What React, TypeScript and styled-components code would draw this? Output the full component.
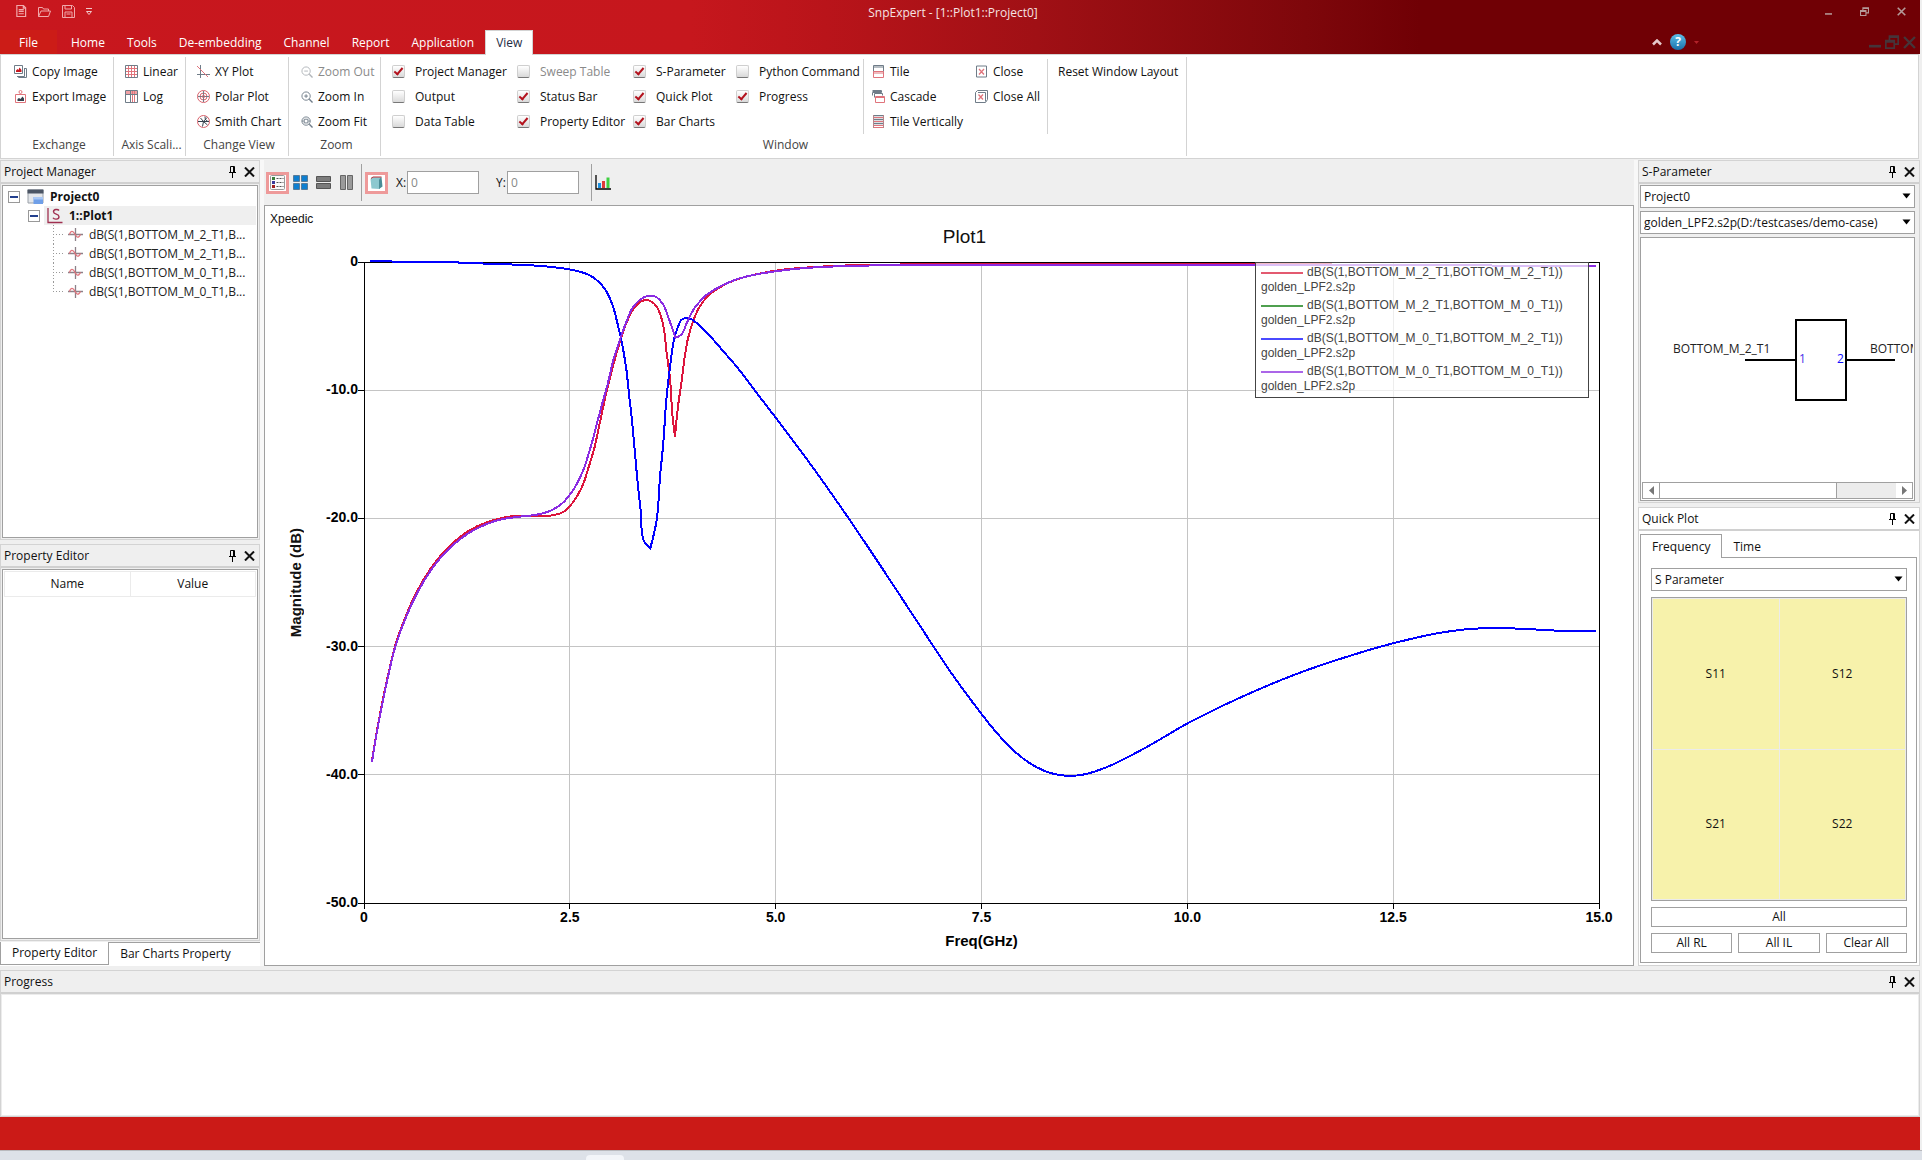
import React, { useState } from "react";
import styled, { createGlobalStyle, css } from "styled-components";

const ui = `"Open Sans", "Noto Sans", sans-serif`;
const plotFont = `"Liberation Sans", Arial, sans-serif`;
const RED = "#e0747c";
const SLATE = "#6f7c88";

const GlobalStyle = createGlobalStyle`
  *, *::before, *::after { box-sizing: border-box; }
  body { margin: 0; font: 12px/16px ${ui}; color: #111; background: #f4f4f4; }
  button, input, select { font: inherit; color: inherit; margin: 0; }
  svg { display: block; flex: none; }
`;

const bareButton = css`
  padding: 0;
  border: 0;
  background: none;
  display: inline-flex;
  align-items: center;
  white-space: nowrap;
`;

/* ---------- shell ---------- */

const Shell = styled.div`
  height: 100vh;
  min-height: 800px;
  display: flex;
  flex-direction: column;
  padding-right: 2px;
  background: #efefef;
`;

const Banner = styled.header`
  background: linear-gradient(90deg, #c8171e 0, #c6171d 36%, #b9141a 43%, #a01015 54%, #7e070b 68%, #700005 74%);
  color: #fff;
`;

const TitleBar = styled.div`
  display: grid;
  grid-template-columns: 1fr auto 1fr;
  align-items: center;
  height: 30px;
  padding-right: 14px;
  padding-bottom: 8px;
`;

const QuickActions = styled.div`
  display: flex;
  align-items: center;
  gap: 11px;
  padding-left: 15px;
`;

const IconButton = styled.button`
  ${bareButton}
`;

const WindowTitle = styled.h1`
  margin: 0;
  padding-top: 4px;
  font-size: 12px;
  line-height: 16px;
  font-weight: 400;
  color: #f6e3e3;
`;

const WindowButtons = styled.div<{ $gap: number }>`
  display: flex;
  align-items: center;
  justify-content: flex-end;
  gap: ${(p) => p.$gap}px;
`;

const TabRow = styled.nav`
  display: flex;
  height: 24px;
`;

const RibbonTab = styled.button<{ $kind?: "file" | "active" }>`
  ${bareButton}
  padding: 1px 11px 0;
  height: 24px;
  color: #fff;
  ${(p) => p.$kind === "file" && css`
    background: #cc1c17;
    padding: 1px 19px 0;
    margin-right: 3px;
  `}
  ${(p) => p.$kind === "active" && css`
    background: #fff;
    color: #1d2c44;
    height: 25px;
    position: relative;
    border: 1px solid #d3d3d3;
    border-bottom: 0;
    padding: 0 10px;
  `}
`;

const TabTools = styled.div`
  display: flex;
  align-items: center;
  margin-left: auto;
  padding-right: 4px;
`;

const HelpGroup = styled.div`
  display: flex;
  align-items: center;
  gap: 8px;
  margin-right: 170px;
`;

const HelpBadge = styled.button`
  ${bareButton}
  justify-content: center;
  width: 16px;
  height: 16px;
  border-radius: 50%;
  background: linear-gradient(#5cc0ea, #1a6fa8);
  color: #fff;
  font-weight: 700;
`;

/* ---------- ribbon ---------- */

const Ribbon = styled.section`
  display: flex;
  height: 105px;
  margin-right: 1px;
  margin-bottom: 1px;
  padding: 2px 0;
  background: #fff;
  border: 1px solid #d3d3d3;
`;

const Group = styled.div<{ $w: number }>`
  display: grid;
  grid-template-rows: 1fr 19px;
  width: ${(p) => p.$w}px;
  border-right: 1px solid #d3d3d3;
`;

const GroupBody = styled.div`
  display: flex;
  padding-top: 2px;
`;

const GroupLabel = styled.div`
  padding-left: 4px;
  text-align: center;
  color: #444;
`;

const Column = styled.div<{ $w?: number; $pad?: number; $line?: boolean }>`
  display: grid;
  grid-template-rows: repeat(3, 25px);
  align-items: center;
  align-self: start;
  padding-left: ${(p) => p.$pad ?? 0}px;
  ${(p) => p.$w && `width: ${p.$w}px;`}
  ${(p) => p.$line && "border-right: 1px solid #d3d3d3;"}
`;

const Command = styled.button`
  ${bareButton}
  gap: 5px;
  &:disabled { color: #8a8a8a; }
`;

const CheckLabel = styled.label<{ $dim?: boolean }>`
  display: flex;
  align-items: center;
  gap: 10px;
  white-space: nowrap;
  color: ${(p) => (p.$dim ? "#8a8a8a" : "#111")};
`;

const CheckBox = styled.input`
  appearance: none;
  flex: none;
  display: grid;
  place-items: center;
  width: 13px;
  height: 13px;
  border: 1px solid #cfcfcf;
  border-bottom-color: #777;
  border-radius: 2px;
  background: linear-gradient(#fff, #d9d9d9);
  &:checked::after {
    content: "";
    width: 5px;
    height: 9px;
    margin-top: -3px;
    border: solid #b3121d;
    border-width: 0 2px 2px 0;
    transform: rotate(40deg);
  }
`;

/* ---------- work area ---------- */

const Workspace = styled.main`
  flex: 1;
  min-height: 0;
  display: grid;
  grid-template-columns: 260px minmax(0, 1fr) 282px;
  gap: 4px;
  background: #f8f8f8;
`;

const Stack = styled.div<{ $rows: string }>`
  display: grid;
  grid-template-columns: minmax(0, 1fr);
  grid-template-rows: ${(p) => p.$rows};
  min-height: 0;
  background: #efefef;
`;

const DockFrame = styled.section<{ $white?: boolean }>`
  display: flex;
  flex-direction: column;
  min-height: 0;
  border: 1px solid #d3d3d3;
  background: ${(p) => (p.$white ? "#fff" : "#efefef")};
`;

const DockHeader = styled.div`
  display: flex;
  align-items: center;
  gap: 8px;
  height: 23px;
  flex: none;
  padding: 0 4px 0 3px;
  border-bottom: 2px solid #d0d0d0;
`;

const DockTitle = styled.h2`
  flex: 1;
  margin: 0;
  font-size: 12px;
  line-height: 16px;
  font-weight: 400;
`;

const DockBody = styled.div<{ $right?: number }>`
  flex: 1;
  min-height: 0;
  display: flex;
  flex-direction: column;
  gap: 3px;
  padding: 1px ${(p) => p.$right ?? 1}px 1px 1px;
`;

const Well = styled.div`
  flex: 1;
  min-height: 0;
  overflow: hidden;
  background: #fff;
  border: 1px solid #a0a0a0;
  padding: 1px;
`;

const Tree = styled.ul`
  list-style: none;
  margin: 0;
  padding: 0;
`;

const TreeRow = styled.div<{ $level: number }>`
  display: flex;
  align-items: center;
  height: 19px;
  gap: 4px;
  padding-left: ${(p) => 4 + p.$level * 20}px;
  white-space: nowrap;
`;

const NodeLabel = styled.span<{ $selected?: boolean }>`
  display: flex;
  flex: 1;
  align-items: center;
  gap: 6px;
  height: 19px;
  padding-left: 3px;
  font-weight: 700;
  background: ${(p) => (p.$selected ? "#efefef" : "none")};
`;

const Expander = styled.button`
  ${bareButton}
  justify-content: center;
  width: 12px;
  height: 12px;
  border: 1px solid #999;
  background: #fff;
`;

const Dash = styled.span`
  width: 8px;
  height: 2px;
  background: #23408e;
`;

const Leaves = styled(Tree)`
  margin-left: 49px;
`;

const Leaf = styled.li`
  display: flex;
  align-items: center;
  height: 19px;
  white-space: nowrap;
  color: #222;
`;

const Branch = styled.span<{ $last?: boolean }>`
  width: 11px;
  margin-right: 4px;
  height: 19px;
  background:
    repeating-linear-gradient(180deg, #999 0 1px, transparent 1px 3px) 0 0 / 1px ${(p) => (p.$last ? "10px" : "19px")} no-repeat,
    repeating-linear-gradient(90deg, #999 0 1px, transparent 1px 3px) 0 9px / 11px 1px no-repeat;
`;

const LeafText = styled.span`
  margin-left: 6px;
`;

const PropertyTable = styled.table`
  width: 100%;
  border-collapse: collapse;
  table-layout: fixed;
  th {
    height: 25px;
    font-weight: 400;
    border: 1px solid #ebebeb;
    padding: 0;
  }
`;

const BottomTabs = styled.div`
  display: flex;
  background: #fff;
  height: 24px;
  margin-top: 1px;
`;

const BottomTab = styled.button<{ $active?: boolean }>`
  ${bareButton}
  height: 23px;
  padding: 0 11px;
  ${(p) => p.$active
    ? css`border: solid #a0a0a0; border-width: 0 1px 1px 1px;`
    : css`flex: 1; border-top: 1px solid #a0a0a0; padding-bottom: 1px;`}
`;

/* ---------- plot window ---------- */

const PlotColumn = styled.div`
  display: flex;
  flex-direction: column;
  min-width: 0;
  min-height: 0;
`;

const Toolbar = styled.div`
  display: flex;
  align-items: center;
  height: 45px;
  flex: none;
  padding-left: 2px;
  background: #efefef;
`;

const ToolButton = styled.button<{ $on?: boolean }>`
  ${bareButton}
  justify-content: center;
  width: 23px;
  height: 22px;
  border: 3px solid ${(p) => (p.$on ? "#ee9a9a" : "transparent")};
  background: ${(p) => (p.$on ? "#fff" : "none")};
`;

const ToolSep = styled.span`
  width: 1px;
  height: 37px;
  margin: 0 3px;
  background: #a0a0a0;
`;

const Coordinate = styled.label`
  display: flex;
  align-items: center;
  margin-right: 9px;
  padding-left: 8px;
`;

const CoordinateInput = styled.input`
  width: 72px;
  height: 23px;
  margin-left: 1px;
  padding: 0 3px;
  border: 1px solid #a0a0a0;
  background: #fff;
  color: #888;
`;

const PlotPanel = styled.div`
  flex: 1;
  min-height: 0;
  display: grid;
  grid-template-columns: 99px minmax(0, 1fr);
  grid-template-rows: 56px minmax(0, 1fr);
  padding: 0 34px 62px 0;
  background: #fff;
  border: 1px solid #a0a0a0;
  font-family: ${plotFont};
`;

const PlotHeading = styled.div`
  grid-column: 1 / -1;
  padding: 5px 0 0 5px;
`;

const PlotTitle = styled.h3`
  margin: 0;
  padding-left: 60px;
  font-size: 19px;
  line-height: 20px;
  font-weight: 400;
  text-align: center;
  color: #111;
`;

const YAxisTitle = styled.div`
  justify-self: start;
  align-self: center;
  margin-left: 22px;
  writing-mode: vertical-rl;
  transform: rotate(180deg);
  font-size: 15px;
  line-height: 18px;
  font-weight: 700;
`;

const PlotArea = styled.div`
  position: relative;
  min-height: 0;
`;

const PlotSvg = styled.svg`
  position: absolute;
  inset: 0;
  width: 100%;
  height: 100%;
  overflow: visible;
  text { font: 700 14px ${plotFont}; }
  text.axis { font-size: 15px; }
`;

const Legend = styled.ul`
  position: absolute;
  top: 0;
  right: 10px;
  width: 334px;
  margin: 0;
  padding: 2px 4px 0 5px;
  list-style: none;
  background: rgba(255, 255, 255, 0.7);
  border: 1px solid #444;
  font-size: 12px;
  line-height: 15px;
  color: #444;
`;

const LegendItem = styled.li`
  height: 33px;
  white-space: nowrap;
`;

const LegendLine = styled.div<{ $color: string }>`
  display: flex;
  align-items: center;
  gap: 4px;
  &::before {
    content: "";
    width: 42px;
    height: 2px;
    background: ${(p) => p.$color};
  }
`;

/* ---------- right docks ---------- */

const SelectWrap = styled.div`
  position: relative;
  flex: none;
  svg { position: absolute; right: 4px; top: 8px; pointer-events: none; }
`;

const SelectBox = styled.select`
  appearance: none;
  display: block;
  width: 100%;
  height: 23px;
  padding: 0 14px 0 3px;
  border: 1px solid #a0a0a0;
  border-radius: 0;
  background: #fff;
`;

const SymbolWell = styled(Well)`
  display: flex;
  flex-direction: column;
`;

const SymbolView = styled.div`
  flex: 1;
  display: flex;
  align-items: center;
  min-width: 0;
  overflow: hidden;
  text { font: 12px ${ui}; }
`;

const ScrollBar = styled.div`
  display: flex;
  height: 17px;
  background: #ececec;
  border: 1px solid #a0a0a0;
`;

const ScrollButton = styled.button`
  ${bareButton}
  justify-content: center;
  width: 16px;
  background: #fff;
`;

const ScrollThumb = styled.span`
  flex: 0 0 178px;
  margin-right: auto;
  background: #fff;
  border: solid #a0a0a0;
  border-width: 0 1px;
`;

const QuickTabs = styled.div`
  display: flex;
  height: 24px;
  flex: none;
  margin-top: 2px;
`;

const QuickTab = styled.button<{ $active?: boolean }>`
  ${bareButton}
  padding: 0 11px;
  ${(p) => p.$active
    ? css`border: 1px solid #a0a0a0; border-bottom: 0;`
    : css`flex: 1; padding-top: 2px; border-bottom: 1px solid #a0a0a0;`}
`;

const QuickPage = styled.div`
  flex: 1;
  display: grid;
  grid-template-columns: minmax(0, 1fr);
  grid-template-rows: 23px 1fr 20px 20px;
  gap: 6px;
  min-height: 0;
  padding: 10px 9px 9px 10px;
  border: solid #a0a0a0;
  border-width: 0 1px 1px 1px;
`;

const QuickBody = styled.div`
  flex: 1;
  min-height: 0;
  display: flex;
  flex-direction: column;
  padding: 1px 2px 2px 1px;
`;

const ParamGrid = styled.div`
  display: grid;
  grid-template: 1fr 1fr / 1fr 1fr;
  gap: 1px;
  padding: 1px;
  border: 1px solid #a0a0a0;
  background: #ebebeb;
`;

const ParamCell = styled.button`
  border: 0;
  background: #f7f2ab;
`;

const ButtonRow = styled.div`
  display: grid;
  grid-auto-columns: 1fr;
  grid-auto-flow: column;
  gap: 6px;
`;

const PlainButton = styled.button`
  ${bareButton}
  justify-content: center;
  background: #fff;
  border: 1px solid #a0a0a0;
`;

/* ---------- bottom ---------- */

const ProgressDock = styled(DockFrame)`
  flex: none;
  height: 147px;
  margin-top: 4px;
`;

const ProgressBody = styled.div`
  flex: 1;
  background: #fff;
  border: 1px solid #ececec;
`;

const StatusBar = styled.footer`
  flex: none;
  height: 33px;
  background: #cb1a17;
`;

const DesktopStrip = styled.div`
  flex: none;
  display: flex;
  align-items: flex-end;
  height: 10px;
  padding-left: 586px;
  margin-right: -2px;
  background: #dde1e8;
  border-top: 1px solid #b9b9bd;
`;

const DesktopTab = styled.span`
  width: 38px;
  height: 5px;
  border-radius: 4px 4px 0 0;
  background: #f3f5f9;
`;

/* ---------- icons ---------- */

const Icon = ({ size = 13, children, color = SLATE }: { size?: number; children: React.ReactNode; color?: string }) => (
  <svg width={size} height={size} viewBox="0 0 13 13" fill="none" stroke={color} aria-hidden="true">{children}</svg>
);

const icons = {
  newDoc: <Icon size={12} color="#f0a9ab"><path d="M2 .5h7l2.500 2.500v9.500H2zM9 .5v3h2.500M4 5h5.500M4 7h5.500M4 9.500h5.500" strokeWidth="1.300" /></Icon>,
  open: <Icon color="#f0a9ab"><path d="M.5 11.500v-9h4l1 1.500h5v2M.5 11.500l2.500-5.500h9.500l-2 5.500z" /></Icon>,
  save: <Icon color="#f0a9ab"><path d="M.5 .5h10l2 2v10H.5zM3 .5v3.500h6.500v-3.500M3 12.500v-5.500h7v5.500M4.500 9h4" /></Icon>,
  more: <svg width="6" height="7" viewBox="0 0 6 7" aria-hidden="true"><path d="M0 .5h6" stroke="#f0c9ca" /><path d="M.5 3.500h5l-2.500 3z" fill="none" stroke="#f0c9ca" /></svg>,
  copy: <Icon><path d="M.5 .5h8v8h-8z" /><path d="M10.500 3v8.500h-7.500M10.500 3.500h2v9h-8v-1" /><path d="M2 7V5.500L3.500 4l1 1 1-2.500L7.500 5v2z" fill="#c8171e" stroke="none" /></Icon>,
  exportImg: <Icon color={RED}><path d="M1.500 4.500h10v8h-10z" /><circle cx="6.500" cy="2" r="1.500" /><path d="M3.500 11V9l1.500-1 1.500 1 2-2.500 1.500 2V11z" fill="#34404c" stroke="none" /></Icon>,
  linear: <Icon><path d="M.5 .5h12v12H.5z" /><path d="M3.500 1v11M6.500 1v11M9.500 1v11M1 3.500h11M1 6.500h11M1 9.500h11" stroke={RED} /></Icon>,
  log: <Icon><path d="M1 1h11v3H1z" fill="#f0a0a4" stroke="none" /><path d="M7.500 1v11M9.500 1v11" stroke={RED} /><path d="M.5 .5h12v12H.5zM.5 4.500h12M5.500 .5v12" /></Icon>,
  xy: <Icon><path d="M3.500 0v13M0 9.500h13" /><path d="M0 1l11 11" stroke={RED} /></Icon>,
  polar: <Icon color="#d9606a"><circle cx="6.500" cy="6.500" r="6" /><circle cx="6.500" cy="6.500" r="3.500" /><path d="M6.500 1v11M1 6.500h11" stroke={SLATE} /><circle cx="6.500" cy="6.500" r="1.200" /></Icon>,
  smith: <Icon color="#d9606a"><circle cx="6.500" cy="6.500" r="6" /><path d="M1 6.500h11M6.500 6.500L10 2.500M6.500 6.500l4 3.500M6.500 6.500l-3-3.500M6.500 6.500l-1 5M12 6.500c-3 0-4-2-4-5" stroke="#34404c" /></Icon>,
  zoomOut: <Icon size={12} color="#b0b4b8"><circle cx="5.500" cy="5.500" r="4.500" /><path d="M3.500 5.500h4" /><path d="M9 9l3.500 3.500" strokeWidth="1.500" /></Icon>,
  zoomIn: <Icon size={12}><circle cx="5.500" cy="5.500" r="4.500" /><path d="M3.500 5.500h4M5.500 3.500v4" /><path d="M9 9l3.500 3.500" strokeWidth="1.500" /></Icon>,
  zoomFit: <Icon size={12}><circle cx="5.500" cy="5.500" r="4.500" /><path d="M3.500 3.500h4v4h-4zM1 5.500h2M8 5.500h2" /><path d="M9 9l3.500 3.500" strokeWidth="1.500" /></Icon>,
  tile: <Icon><path d="M1.500 .5v6h10v-6zM1.500 2h10" /><path d="M1.500 6.500h10v6h-10zM1.500 8h10" stroke={RED} /></Icon>,
  cascade: <Icon><path d="M.5 .5h9v2h-9v3M.5 1.500h9M2.500 3.500h8v2M2.500 3.500v4" /><path d="M3.500 6.500h9v6h-9zM3.500 7.500h9" stroke={RED} /></Icon>,
  tileV: <Icon><path d="M1 .5h11M1 4.500h11M1 8.500h11" strokeWidth="1.500" /><path d="M1 2.500h11M1 6.500h11M1 10.500h11M1 12.500h11" stroke={RED} /><path d="M1.500 0v13M11.500 0v13" stroke="#b5848a" /></Icon>,
  close: <Icon><path d="M1.500 1h10v11h-10z" /><path d="M4 4l5 5.500M9 4L4 9.500" stroke={RED} strokeWidth="1.300" /></Icon>,
  closeAll: <Icon><path d="M2.500 .5h10v9l-2 3h-10v-10zM3 2.500h7.500v9" /><path d="M3.500 4.500l4.500 5M8 4.500l-4.500 5" stroke={RED} strokeWidth="1.300" /></Icon>,
  pin: <svg width="8" height="12" viewBox="0 0 8 12" fill="none" stroke="#000" aria-hidden="true"><path d="M2.500 6.500v-6h4v6M1 6.500h7M4.500 7v5" /><path d="M5.500 1v5" /></svg>,
  x: <svg width="11" height="10" viewBox="0 0 11 10" aria-hidden="true"><path d="M1 .5l9 9M10 .5l-9 9" stroke="#111" strokeWidth="2" /></svg>,
  project: <svg width="17" height="16" viewBox="0 0 17 16" aria-hidden="true"><path d="M1 1h15v13H1z" fill="#e3e6ea" stroke="#9aa0a8" /><path d="M.5 .5h16v4H.5z" fill="#4b5564" /><path d="M6.500 8h9.500v7H6.500z" fill="#6f9fe8" /><path d="M6.500 8h9.500v2.500H6.500z" fill="#a9c7f4" /></svg>,
  plot: <svg width="16" height="16" viewBox="0 0 16 16" fill="none" stroke="#a03050" aria-hidden="true"><path d="M1 0v14.500h14.500" strokeWidth="1.300" /><path d="M12 2.500C11 1 6.500 1 6.500 3.800c0 3 5.500 1.800 5.500 4.900 0 3-5 3-6 1" strokeWidth="1.400" /></svg>,
  wave: <svg width="15" height="15" viewBox="0 0 15 15" fill="none" aria-hidden="true"><path d="M7.500 1v13M0 7.500h15" stroke="#8c8088" strokeWidth="1.300" /><path d="M1.500 7.500C2.500 3.500 5 3.500 6.500 6.500s3.500 6 6 1" stroke={RED} strokeWidth="1.300" /></svg>,
  list: <svg width="15" height="15" viewBox="0 0 15 15" aria-hidden="true"><rect x=".5" y=".5" width="14" height="14" rx="1" fill="#fafafa" stroke="#999" /><path d="M2 2h3v3H2z" fill="#3b7d3b" /><path d="M2 6h3v3H2z" fill="#3a3a9a" /><path d="M2 10h3v3H2z" fill="#a02020" /><path d="M6.500 3.500h7M6.500 7.500h7M6.500 11.500h7" stroke="#555" strokeDasharray="2 1" /></svg>,
  quad: <svg width="15" height="15" viewBox="0 0 15 15" fill="#0f7fd0" stroke="#3f5668" strokeWidth=".6" aria-hidden="true"><path d="M.5 .5h6v6h-6zM8.500 .5h6v6h-6zM.5 8.500h6v6h-6zM8.500 8.500h6v6h-6z" /></svg>,
  rows: <svg width="15" height="15" viewBox="0 0 15 15" fill="#7c7c7c" stroke="#555" aria-hidden="true"><path d="M.5 1.500h14v5H.5zM.5 8.500h14v5H.5z" /></svg>,
  cols: <svg width="15" height="15" viewBox="0 0 15 15" fill="#9a9a9a" stroke="#666" aria-hidden="true"><path d="M1.500 .5h5v14h-5zM8.500 .5h5v14h-5z" /></svg>,
  cube: <svg width="15" height="14" viewBox="0 0 15 14" aria-hidden="true"><path d="M1.500 3l1.500-2h9v9.500L10.500 13l-8-.5z" fill="#8cc8cf" /><path d="M10 3.500v9.500l3.500-2.500L12.500 1z" fill="#4b8c96" /><path d="M2 2.500L4 1h8.500" stroke="#c03038" fill="none" /></svg>,
  bars: <svg width="16" height="15" viewBox="0 0 16 15" aria-hidden="true"><path d="M3 8h3v5H3z" fill="#1a90e0" /><path d="M7 6h3v7H7z" fill="#e03a3a" /><path d="M11.500 2.500h3V13h-3z" fill="#3fd040" /><path d="M1 0v14h15" fill="none" stroke="#000" strokeWidth="1.300" /></svg>,
};

const Minimize = ({ w, color }: { w: number; color: string }) => (
  <svg width={w} height={w} viewBox="0 0 10 10" aria-hidden="true"><path d="M0 8.500h10" stroke={color} strokeWidth="2.200" /></svg>
);
const Restore = ({ w, color }: { w: number; color: string }) => (
  <svg width={w} height={w} viewBox="0 0 10 10" fill="none" stroke={color} strokeWidth="1.200" aria-hidden="true">
    <path d="M.6 4h6v5.400h-6zM.6 5h6M3.200 3.500V.8h6.200v5.700H7M3.200 1.500h6.200" />
  </svg>
);
const Cross = ({ w, color }: { w: number; color: string }) => (
  <svg width={w} height={w} viewBox="0 0 10 10" aria-hidden="true"><path d="M.8 .8l8.400 8.400M9.200 .8L.8 9.200" stroke={color} strokeWidth="1.800" /></svg>
);
const Arrow = () => (
  <svg width="9" height="6" viewBox="0 0 9 6" aria-hidden="true"><path d="M.5 .5h8L4.500 5.500z" fill="#000" /></svg>
);

/* ---------- parts ---------- */

const Tool = ({ icon, text, disabled }: { icon: keyof typeof icons; text: string; disabled?: boolean }) => (
  <Command type="button" disabled={disabled}>{icons[icon]}<span>{text}</span></Command>
);

const Toggle = ({ text, on, disabled }: { text: string; on?: boolean; disabled?: boolean }) => {
  const [checked, setChecked] = useState(!!on);
  return (
    <CheckLabel $dim={disabled}>
      <CheckBox type="checkbox" checked={checked} disabled={disabled} onChange={() => setChecked(!checked)} />
      {text}
    </CheckLabel>
  );
};

const Header = ({ title }: { title: string }) => (
  <DockHeader>
    <DockTitle>{title}</DockTitle>
    <IconButton type="button" aria-label={`Pin ${title}`}>{icons.pin}</IconButton>
    <IconButton type="button" aria-label={`Close ${title}`}>{icons.x}</IconButton>
  </DockHeader>
);

const Choice = ({ label, value }: { label: string; value: string }) => (
  <SelectWrap>
    <SelectBox aria-label={label} defaultValue={value}><option>{value}</option></SelectBox>
    <Arrow />
  </SelectWrap>
);

const leaves = [
  "dB(S(1,BOTTOM_M_2_T1,B...",
  "dB(S(1,BOTTOM_M_2_T1,B...",
  "dB(S(1,BOTTOM_M_0_T1,B...",
  "dB(S(1,BOTTOM_M_0_T1,B...",
];

const traces = [
  { name: "dB(S(1,BOTTOM_M_2_T1,BOTTOM_M_2_T1))", tint: "#e35a70" },
  { name: "dB(S(1,BOTTOM_M_2_T1,BOTTOM_M_0_T1))", tint: "#4fa04f" },
  { name: "dB(S(1,BOTTOM_M_0_T1,BOTTOM_M_2_T1))", tint: "#4a4aff" },
  { name: "dB(S(1,BOTTOM_M_0_T1,BOTTOM_M_0_T1))", tint: "#ab66e8" },
];

/* Trace vertices on the drawing canvas; the axes frame spans 364..1599 by 262..903. */
const blue =
  "370,261.500 443,262 483,263.500 512,264.500 534,265.500 547,266.500 558,267.700 570,269.500 580,271.700 589,275 595,278.700 601.700,285 607.300,293 613.300,307.300 617.300,322.700 621,338.300 626,366.700 629.300,396.700 632.300,423.300 634.700,450 637.700,483 641,513 644,541.300 650.300,548.300 656.700,520 660,477 663.300,443 666.300,400 670,366.700 674.700,336.700 680.700,320.300 686.300,318 692,319.500 699.300,325.500 710,336 723.300,351.300 736.700,366.700 756.700,393 780,423.300 810,463.500 846,514.500 880,565 921.200,627.700 952.700,675 982.300,715 996.300,732.300 1013.300,750.300 1030.300,763.500 1044.800,771 1059.300,775 1071.500,775.700 1081.200,775 1093.300,772 1110.200,765.700 1129.600,756.200 1151.400,744.400 1188.300,723 1238.700,698.300 1296.900,673.800 1360,652.700 1394.300,643 1444.700,632 1485.900,628 1532,629.300 1558.600,630.700 1596,631";
const purple =
  "372,761.700 376.700,733.300 381.700,706.700 387.300,680 395.300,646.700 405,619.500 416.700,594 430,571.500 442,556 455,543.300 470,532.300 486.700,524 501.700,519.300 516.700,517 536.700,514.700 550,511 558.300,506.300 564,501.700 570.300,494 576.700,484.300 583.300,470 588.300,455 593.300,437.700 598.300,418.300 602.700,401.700 607.700,384 613.300,360 621,336.700 626,322.700 631.700,309.300 637.700,301.700 644,297.300 650.300,295.700 656.700,297.300 663,304.300 668.700,318.300 675.300,337.700 681,335 687.300,321.700 693.700,309.300 700,301.300 706,295.300 721.700,285.700 736.700,279.300 753.300,275 780,270.700 806,268 833,266.500 870,265.500 940,265 1279,265 1596,265.800";
const red =
  "372,760.700 376.700,732 381.700,705.400 387.300,678.600 395.300,645.300 405,618 416.700,592 430,569.500 442,554 455,541 470,530 486.700,522.300 501.700,518 514,516 550,515.700 563.300,512 570.300,505.700 576.700,496.700 582.700,485.300 588.300,468.300 594.300,448.300 598.300,430 603.300,406.700 607.700,386.700 614,362.300 621,338.300 626,324 631.700,311.700 637.700,304 644,300.300 650.300,301 656.700,306.700 663,324.300 666.700,353.300 670,378.300 672.300,413.300 675,436.700 678,406.700 682,378.300 685,355 688,338.300 693.300,320.700 699.300,307.300 708.300,295.700 721.700,286.300 736.700,279.500 753.300,275 780,270 833,266 900,264.500 1332,264.500";

/* Spline through the vertices; sharp notches keep their corners. */
const toPath = (list: string) => {
  const pts = list.split(" ").map((s) => s.split(",").map(Number));
  const tangent = (i: number) => {
    const a = pts[i - 1];
    const b = pts[i];
    const c = pts[i + 1];
    if (!a || !c) return [0, 0];
    const u = [b[0] - a[0], b[1] - a[1]];
    const v = [c[0] - b[0], c[1] - b[1]];
    const lu = Math.hypot(u[0], u[1]);
    const lv = Math.hypot(v[0], v[1]);
    if ((u[0] * v[0] + u[1] * v[1]) / (lu * lv) < 0.75) return [0, 0];
    const x = u[0] / lu + v[0] / lv;
    const y = u[1] / lu + v[1] / lv;
    const n = Math.hypot(x, y);
    return [x / n, y / n];
  };
  let d = `M${pts[0][0]} ${pts[0][1]}`;
  for (let i = 1; i < pts.length; i++) {
    const [p, q] = [pts[i - 1], pts[i]];
    const k = Math.hypot(q[0] - p[0], q[1] - p[1]) / 3;
    const [s, t] = [tangent(i - 1), tangent(i)];
    d += `C${p[0] + s[0] * k} ${p[1] + s[1] * k} ${q[0] - t[0] * k} ${q[1] - t[1] * k} ${q[0]} ${q[1]}`;
  }
  return d;
};

const curves = [
  { color: "#dc143c", d: toPath(red) },
  { color: "#0000ff", d: toPath(blue) },
  { color: "#8a2be2", d: toPath(purple) },
];

const yTicks = ["0", "-10.0", "-20.0", "-30.0", "-40.0", "-50.0"];
const xTicks = ["0", "2.5", "5.0", "7.5", "10.0", "12.5", "15.0"];
const pct = (i: number, n: number) => `${(i / n) * 100}%`;

const Chart = () => (
  <PlotArea>
    <PlotSvg role="img" aria-label="Plot1 magnitude over frequency">
      <g stroke="#c4c4c4" shapeRendering="crispEdges">
        {yTicks.slice(1, -1).map((t, i) => <line key={t} x1="0" x2="100%" y1={pct(i + 1, 5)} y2={pct(i + 1, 5)} />)}
        {xTicks.slice(1, -1).map((t, i) => <line key={t} y1="0" y2="100%" x1={pct(i + 1, 6)} x2={pct(i + 1, 6)} />)}
      </g>
      <g stroke="#000" shapeRendering="crispEdges">
        <rect width="100%" height="100%" fill="none" />
        {yTicks.map((t, i) => <line key={t} x1="-6" x2="0" y1={pct(i, 5)} y2={pct(i, 5)} />)}
        {xTicks.map((t, i) => (
          <svg key={t} y="100%" overflow="visible"><line x1={pct(i, 6)} x2={pct(i, 6)} y1="0" y2="6" /></svg>
        ))}
      </g>
      {yTicks.map((t, i) => <text key={t} x="-6" y={pct(i, 5)} dy="4" textAnchor="end">{t}</text>)}
      {xTicks.map((t, i) => <text key={t} x={pct(i, 6)} y="100%" dy="19" textAnchor="middle">{t}</text>)}
      <text className="axis" x="50%" y="100%" dy="43" textAnchor="middle">Freq(GHz)</text>
      <svg width="100%" height="100%" viewBox="364 262 1235 641" preserveAspectRatio="none" overflow="visible"
        fill="none" strokeWidth="2" shapeRendering="crispEdges">
        {curves.map((c) => <path key={c.color} d={c.d} stroke={c.color} vectorEffect="non-scaling-stroke" />)}
      </svg>
    </PlotSvg>
    <Legend>
      {traces.map((t) => (
        <LegendItem key={t.name}>
          <LegendLine $color={t.tint}>{t.name}</LegendLine>
          <div>golden_LPF2.s2p</div>
        </LegendItem>
      ))}
    </Legend>
  </PlotArea>
);

export default function App() {
  return (
    <>
      <GlobalStyle />
      <Shell>
        <Banner>
          <TitleBar>
            <QuickActions>
              <IconButton type="button" aria-label="New">{icons.newDoc}</IconButton>
              <IconButton type="button" aria-label="Open">{icons.open}</IconButton>
              <IconButton type="button" aria-label="Save">{icons.save}</IconButton>
              <IconButton type="button" aria-label="Customize">{icons.more}</IconButton>
            </QuickActions>
            <WindowTitle>SnpExpert - [1::Plot1::Project0]</WindowTitle>
            <WindowButtons $gap={28}>
              <IconButton type="button" aria-label="Minimize"><Minimize w={7} color="#b59a9a" /></IconButton>
              <IconButton type="button" aria-label="Restore"><Restore w={9} color="#b59a9a" /></IconButton>
              <IconButton type="button" aria-label="Close"><Cross w={9} color="#b59a9a" /></IconButton>
            </WindowButtons>
          </TitleBar>
          <TabRow>
            <RibbonTab type="button" $kind="file">File</RibbonTab>
            {["Home", "Tools", "De-embedding", "Channel", "Report", "Application"].map((t) => (
              <RibbonTab type="button" key={t}>{t}</RibbonTab>
            ))}
            <RibbonTab type="button" $kind="active">View</RibbonTab>
            <TabTools>
              <HelpGroup>
                <IconButton type="button" aria-label="Collapse ribbon">
                  <svg width="10" height="7" viewBox="0 0 10 7" aria-hidden="true"><path d="M1 5.500l4-4 4 4" fill="none" stroke="#e6c9cc" strokeWidth="2.500" /></svg>
                </IconButton>
                <HelpBadge type="button" aria-label="Help">?</HelpBadge>
                <svg width="5" height="3" viewBox="0 0 5 3" aria-hidden="true"><path d="M0 0h5L2.500 3z" fill="#b3222a" /></svg>
              </HelpGroup>
              <WindowButtons $gap={4}>
                <IconButton type="button" aria-label="Minimize plot"><Minimize w={12} color="#45353a" /></IconButton>
                <IconButton type="button" aria-label="Restore plot"><Restore w={14} color="#45353a" /></IconButton>
                <IconButton type="button" aria-label="Close plot"><Cross w={13} color="#45353a" /></IconButton>
              </WindowButtons>
            </TabTools>
          </TabRow>
        </Banner>

        <Ribbon>
          <Group $w={113}>
            <GroupBody>
              <Column $pad={13}><Tool icon="copy" text="Copy Image" /><Tool icon="exportImg" text="Export Image" /></Column>
            </GroupBody>
            <GroupLabel>Exchange</GroupLabel>
          </Group>
          <Group $w={72}>
            <GroupBody>
              <Column $pad={11}><Tool icon="linear" text="Linear" /><Tool icon="log" text="Log" /></Column>
            </GroupBody>
            <GroupLabel>Axis Scali...</GroupLabel>
          </Group>
          <Group $w={103}>
            <GroupBody>
              <Column $pad={11}>
                <Tool icon="xy" text="XY Plot" /><Tool icon="polar" text="Polar Plot" /><Tool icon="smith" text="Smith Chart" />
              </Column>
            </GroupBody>
            <GroupLabel>Change View</GroupLabel>
          </Group>
          <Group $w={92}>
            <GroupBody>
              <Column $pad={12}>
                <Tool icon="zoomOut" text="Zoom Out" disabled /><Tool icon="zoomIn" text="Zoom In" /><Tool icon="zoomFit" text="Zoom Fit" />
              </Column>
            </GroupBody>
            <GroupLabel>Zoom</GroupLabel>
          </Group>
          <Group $w={806}>
            <GroupBody>
              <Column $w={125} $pad={11}>
                <Toggle text="Project Manager" on /><Toggle text="Output" /><Toggle text="Data Table" />
              </Column>
              <Column $w={116} $pad={11}>
                <Toggle text="Sweep Table" disabled /><Toggle text="Status Bar" on /><Toggle text="Property Editor" on />
              </Column>
              <Column $w={109} $pad={11}>
                <Toggle text="S-Parameter" on /><Toggle text="Quick Plot" on /><Toggle text="Bar Charts" on />
              </Column>
              <Column $w={133} $pad={5} $line>
                <Toggle text="Python Command" /><Toggle text="Progress" on />
              </Column>
              <Column $w={101} $pad={8}>
                <Tool icon="tile" text="Tile" /><Tool icon="cascade" text="Cascade" /><Tool icon="tileV" text="Tile Vertically" />
              </Column>
              <Column $w={83} $pad={10} $line><Tool icon="close" text="Close" /><Tool icon="closeAll" text="Close All" /></Column>
              <Column $pad={10}><Command type="button">Reset Window Layout</Command></Column>
            </GroupBody>
            <GroupLabel>Window</GroupLabel>
          </Group>
        </Ribbon>

        <Workspace>
          <Stack $rows="380fr 4px 397fr 25px">
            <DockFrame>
              <Header title="Project Manager" />
              <DockBody>
                <Well>
                  <Tree>
                    <li>
                      <TreeRow $level={0}>
                        <Expander type="button" aria-label="Collapse Project0"><Dash /></Expander>
                        <NodeLabel>{icons.project}Project0</NodeLabel>
                      </TreeRow>
                      <TreeRow $level={1}>
                        <Expander type="button" aria-label="Collapse Plot1"><Dash /></Expander>
                        <NodeLabel $selected>{icons.plot}1::Plot1</NodeLabel>
                      </TreeRow>
                      <Leaves>
                        {leaves.map((l, i) => (
                          <Leaf key={i}><Branch $last={i === leaves.length - 1} />{icons.wave}<LeafText>{l}</LeafText></Leaf>
                        ))}
                      </Leaves>
                    </li>
                  </Tree>
                </Well>
              </DockBody>
            </DockFrame>
            <span />
            <DockFrame>
              <Header title="Property Editor" />
              <DockBody>
                <Well>
                  <PropertyTable><thead><tr><th>Name</th><th>Value</th></tr></thead></PropertyTable>
                </Well>
              </DockBody>
            </DockFrame>
            <BottomTabs>
              <BottomTab type="button" $active>Property Editor</BottomTab>
              <BottomTab type="button">Bar Charts Property</BottomTab>
            </BottomTabs>
          </Stack>

          <PlotColumn>
            <Toolbar>
              <ToolButton type="button" $on aria-label="Legend">{icons.list}</ToolButton>
              <ToolButton type="button" aria-label="Tile grid">{icons.quad}</ToolButton>
              <ToolButton type="button" aria-label="Stack rows">{icons.rows}</ToolButton>
              <ToolButton type="button" aria-label="Stack columns">{icons.cols}</ToolButton>
              <ToolSep />
              <ToolButton type="button" $on aria-label="3D view">{icons.cube}</ToolButton>
              <Coordinate>X:<CoordinateInput defaultValue="0" /></Coordinate>
              <Coordinate>Y:<CoordinateInput defaultValue="0" /></Coordinate>
              <ToolSep />
              <IconButton type="button" aria-label="Bar charts">{icons.bars}</IconButton>
            </Toolbar>
            <PlotPanel>
              <PlotHeading>
                Xpeedic
                <PlotTitle>Plot1</PlotTitle>
              </PlotHeading>
              <YAxisTitle>Magnitude (dB)</YAxisTitle>
              <Chart />
            </PlotPanel>
          </PlotColumn>

          <Stack $rows="343fr 4px 459fr">
            <DockFrame>
              <Header title="S-Parameter" />
              <DockBody $right={4}>
                <Choice label="Project" value="Project0" />
                <Choice label="Data file" value="golden_LPF2.s2p(D:/testcases/demo-case)" />
                <SymbolWell>
                  <SymbolView>
                    <svg width="330" height="84" viewBox="0 0 330 84" aria-label="Two port symbol">
                      <g stroke="#000" strokeWidth="2" fill="none">
                        <rect x="154" y="1" width="50" height="80" />
                        <path d="M103 41h51M204 41h49" />
                      </g>
                      <text x="31" y="34" fill="#222">BOTTOM_M_2_T1</text>
                      <text x="228" y="34" fill="#222">BOTTOM_M_0_T1</text>
                      <text x="157" y="44" fill="#4a30e8">1</text>
                      <text x="195" y="44" fill="#1010ff">2</text>
                    </svg>
                  </SymbolView>
                  <ScrollBar>
                    <ScrollButton type="button" aria-label="Scroll left"><svg width="5" height="9" viewBox="0 0 5 9"><path d="M5 0v9L0 4.500z" fill="#777" /></svg></ScrollButton>
                    <ScrollThumb />
                    <ScrollButton type="button" aria-label="Scroll right"><svg width="5" height="9" viewBox="0 0 5 9"><path d="M0 0v9l5-4.500z" fill="#777" /></svg></ScrollButton>
                  </ScrollBar>
                </SymbolWell>
              </DockBody>
            </DockFrame>
            <span />
            <DockFrame $white>
              <Header title="Quick Plot" />
              <QuickBody>
                <QuickTabs>
                  <QuickTab type="button" $active>Frequency</QuickTab>
                  <QuickTab type="button">Time</QuickTab>
                </QuickTabs>
                <QuickPage>
                  <Choice label="Parameter type" value="S Parameter" />
                  <ParamGrid>
                    {["S11", "S12", "S21", "S22"].map((s) => <ParamCell type="button" key={s}>{s}</ParamCell>)}
                  </ParamGrid>
                  <PlainButton type="button">All</PlainButton>
                  <ButtonRow>
                    {["All RL", "All IL", "Clear All"].map((s) => <PlainButton type="button" key={s}>{s}</PlainButton>)}
                  </ButtonRow>
                </QuickPage>
              </QuickBody>
            </DockFrame>
          </Stack>
        </Workspace>

        <ProgressDock>
          <Header title="Progress" />
          <ProgressBody />
        </ProgressDock>
        <StatusBar />
        <DesktopStrip><DesktopTab /></DesktopStrip>
      </Shell>
    </>
  );
}
